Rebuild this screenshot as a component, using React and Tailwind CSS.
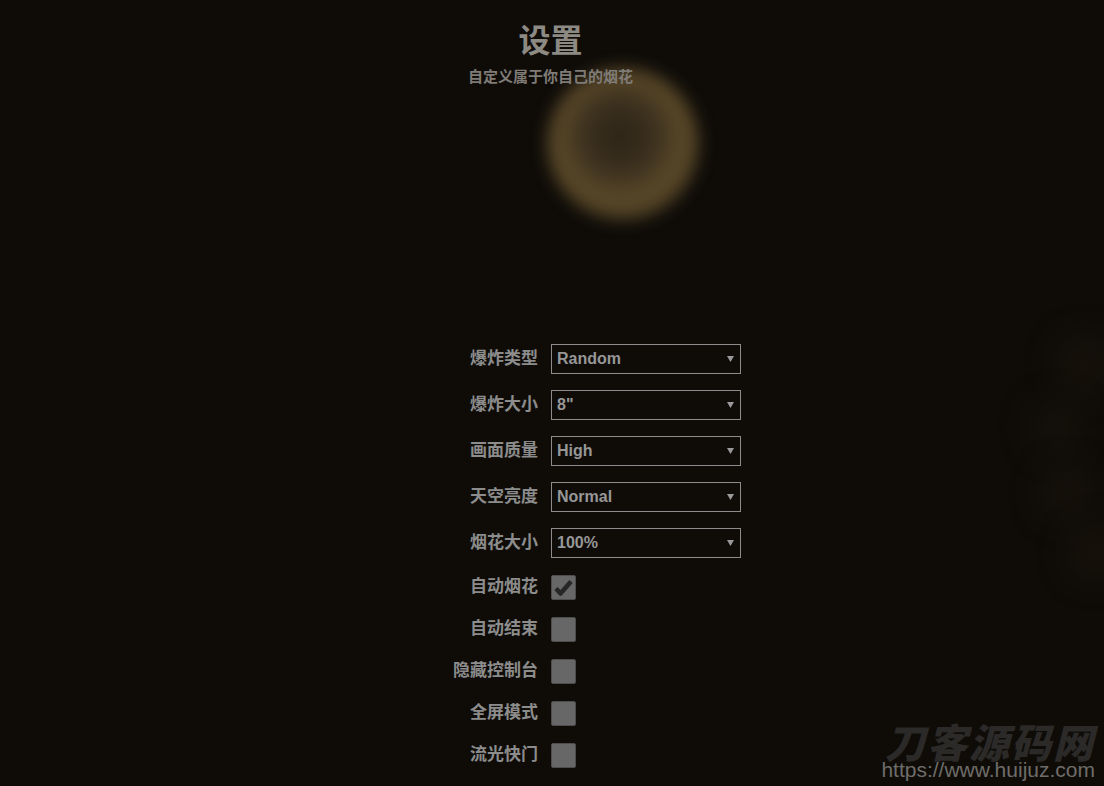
import { useState } from "react";

const selects = [
  { label: "爆炸类型", value: "Random", options: ["Random", "Crysanthemum", "Ring", "Palm", "Willow", "Strobe", "Crossette"] },
  { label: "爆炸大小", value: '8"', options: ['3"', '4"', '6"', '8"', '12"', '16"'] },
  { label: "画面质量", value: "High", options: ["Low", "Normal", "High"] },
  { label: "天空亮度", value: "Normal", options: ["None", "Dim", "Normal"] },
  { label: "烟花大小", value: "100%", options: ["50%", "62%", "75%", "88%", "100%"] },
];

const toggles = [
  { label: "自动烟花", checked: true },
  { label: "自动结束", checked: false },
  { label: "隐藏控制台", checked: false },
  { label: "全屏模式", checked: false },
  { label: "流光快门", checked: false },
];

const font = "font-['Liberation_Sans','Noto_Sans_CJK_SC',sans-serif]";

function Select({ value, options }) {
  const [current, setCurrent] = useState(value);
  return (
    <div className="relative w-[190px] h-[30px]">
      <select
        value={current}
        onChange={(e) => setCurrent(e.target.value)}
        className={`appearance-none w-full h-full bg-transparent border border-[#8c8c8c] pl-[5px] text-[16px] font-bold text-[#979797] outline-none ${font}`}
      >
        {options.map((o) => (
          <option key={o} value={o} className="bg-[#0f0c08]">
            {o}
          </option>
        ))}
      </select>
      {/* dropdown arrow */}
      <svg
        className="pointer-events-none absolute right-[7px] top-[12px]"
        width="7"
        height="6"
        viewBox="0 0 7 6"
      >
        <path d="M0 0 H7 L3.5 6 Z" fill="#9a9a9a" />
      </svg>
    </div>
  );
}

function Checkbox({ checked }) {
  const [on, setOn] = useState(checked);
  return (
    <button
      onClick={() => setOn((v) => !v)}
      className="w-[25px] h-[25px] bg-[#676767] border border-[#4d4d4d] rounded-[2px] flex items-center justify-center"
    >
      {on && (
        <svg width="21" height="19" viewBox="0 0 21 19">
          <path
            d="M3 10.5 L7.5 15.5 L18 3.5"
            fill="none"
            stroke="#262626"
            strokeWidth="4.5"
            strokeLinejoin="round"
          />
        </svg>
      )}
    </button>
  );
}

export default function App() {
  return (
    <div className={`relative w-full min-h-[786px] bg-[#0f0c08] overflow-hidden ${font}`}>
      {/* soft firework glow */}
      <div className="absolute left-[547px] top-[68px] w-[152px] h-[152px] rounded-full blur-[8px] bg-[radial-gradient(circle_at_48%_45%,#2c2417_0%,#3a2f1e_28%,#5a4929_56%,#4a3c22_72%,rgba(15,12,8,0)_100%)]" />
      <div className="absolute left-[1055px] top-[335px] w-[60px] h-[60px] rounded-full blur-[14px] bg-[#15110a]" />
      <div className="absolute left-[1030px] top-[400px] w-[55px] h-[55px] rounded-full blur-[14px] bg-[#14110a]" />
      <div className="absolute left-[1040px] top-[465px] w-[55px] h-[55px] rounded-full blur-[14px] bg-[#15110a]" />
      <div className="absolute left-[1068px] top-[525px] w-[55px] h-[55px] rounded-full blur-[14px] bg-[#16120a]" />

      <div className="relative flex flex-col items-center">
        {/* Header */}
        <h1 className="pt-[21px] text-[32px] leading-[40px] font-bold text-[#8d8983] ml-[-3px]">
          设置
        </h1>
        <p className="mt-[7px] text-[15px] leading-[18px] font-semibold text-[#7f7b76] ml-[-3px]">
          自定义属于你自己的烟花
        </p>

        {/* Form */}
        <div className="mt-[258px] w-[378px] flex flex-col gap-4">
          {selects.map((s) => (
            <div key={s.label} className="flex items-center h-[30px]">
              <span className="w-[188px] pr-[13px] text-right text-[17px] font-semibold text-[#8c8c8c]">
                {s.label}
              </span>
              <Select value={s.value} options={s.options} />
            </div>
          ))}
          {toggles.map((t) => (
            <div key={t.label} className="flex items-center h-[26px]">
              <span className="w-[188px] pr-[13px] text-right text-[17px] font-semibold text-[#8c8c8c]">
                {t.label}
              </span>
              <Checkbox checked={t.checked} />
            </div>
          ))}
        </div>
      </div>

      {/* watermark */}
      <div className="absolute right-[9px] bottom-[4px] flex flex-col items-end pointer-events-none">
        <span className="text-[40px] leading-[34px] font-black italic tracking-[2px] text-[#2b2a28] font-['Noto_Sans_CJK_SC',sans-serif]">
          刀客源码网
        </span>
        <span className="text-[21px] leading-[24px] text-[#6e6c69] font-['Liberation_Sans',sans-serif]">
          https://www.huijuz.com
        </span>
      </div>
    </div>
  );
}
